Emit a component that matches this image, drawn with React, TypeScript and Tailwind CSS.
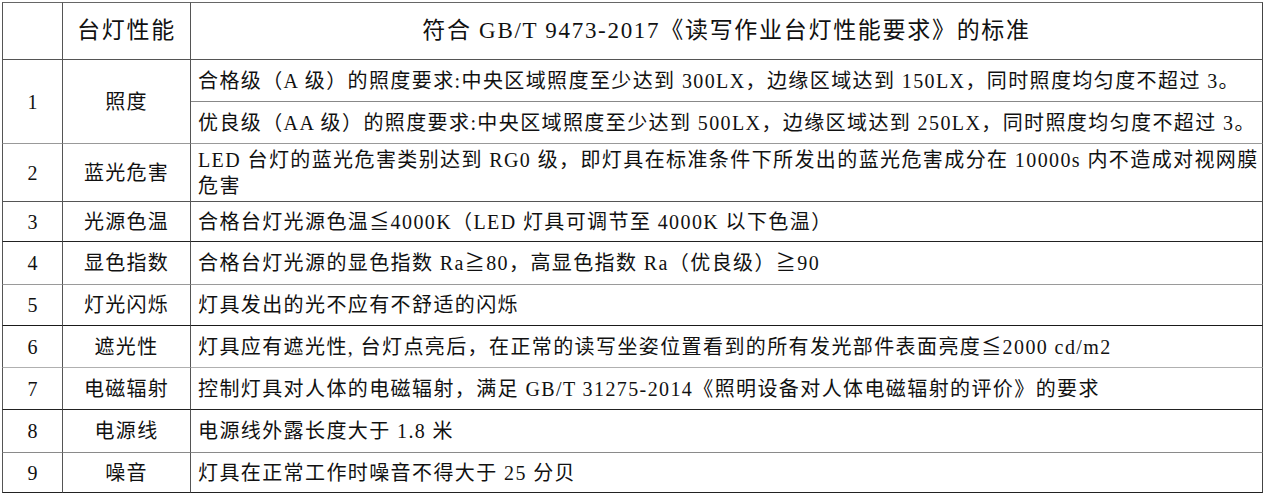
import React from "react";

type Row = {
    no: string;
    name: string;
    text: React.ReactNode;
    h: string;
    line: string;
};

// rows 2-9, row 1 has two sub rows so it is written by hand below
const rows: Row[] = [
    {
        no: "2",
        name: "蓝光危害",
        text: (
            <>
                <span className="whitespace-nowrap">
                    LED 台灯的蓝光危害类别达到 RG0 级，即灯具在标准条件下所发出的蓝光危害成分在 10000s 内不造成对视网膜
                </span>
                <br />
                危害
            </>
        ),
        h: "h-[58px]",
        line: "border-b-[#555]",
    },
    {
        no: "3",
        name: "光源色温",
        text: "合格台灯光源色温≦4000K（LED 灯具可调节至 4000K 以下色温）",
        h: "h-[40px]",
        line: "border-b-[#222]",
    },
    {
        no: "4",
        name: "显色指数",
        text: "合格台灯光源的显色指数 Ra≧80，高显色指数 Ra（优良级）≧90",
        h: "h-[43px]",
        line: "border-b-[#9a9a9a]",
    },
    {
        no: "5",
        name: "灯光闪烁",
        text: "灯具发出的光不应有不舒适的闪烁",
        h: "h-[41px]",
        line: "border-b-[#1a1a1a]",
    },
    {
        no: "6",
        name: "遮光性",
        text: "灯具应有遮光性, 台灯点亮后，在正常的读写坐姿位置看到的所有发光部件表面亮度≦2000 cd/m2",
        h: "h-[42px]",
        line: "border-b-[#b0b0b0]",
    },
    {
        no: "7",
        name: "电磁辐射",
        text: "控制灯具对人体的电磁辐射，满足 GB/T 31275-2014《照明设备对人体电磁辐射的评价》的要求",
        h: "h-[42px]",
        line: "border-b-[#222]",
    },
    {
        no: "8",
        name: "电源线",
        text: "电源线外露长度大于 1.8 米",
        h: "h-[43px]",
        line: "border-b-[#8a8a8a]",
    },
    {
        no: "9",
        name: "噪音",
        text: "灯具在正常工作时噪音不得大于 25 分贝",
        h: "h-[40px]",
        line: "border-b-[#222]",
    },
];

const App = () => {
    const noCell =
        "border-l border-r border-b border-l-[#555] border-r-[#555] text-center align-middle text-[20px] p-0";
    const nameCell =
        "border-r border-b border-r-[#555] text-center align-middle text-[20px] tracking-[1.3px] p-0";
    const textCell =
        "border-r border-b border-r-[#444] text-left align-middle text-[20px] tracking-[1.4px] leading-[26px] pl-[7px] pr-0 py-0";

    return (
        <div className="bg-white w-[1266px] h-[495px] pl-[2px] pt-[2px] font-['Liberation_Serif','Noto_Sans_CJK_SC',serif] text-[#111]">
            <table className="table-fixed border-separate border-spacing-0 w-[1261px]">
                <colgroup>
                    <col className="w-[61px]" />
                    <col className="w-[128px]" />
                    <col className="w-[1072px]" />
                </colgroup>
                <tbody>
                    <tr>
                        <td className="h-[58px] border-t border-t-[#666] border-l border-l-[#555] border-r border-r-[#555] border-b border-b-[#555] p-0"></td>
                        <td className="border-t border-t-[#666] border-r border-r-[#555] border-b border-b-[#555] text-center align-middle text-[23px] tracking-[1.8px] p-0">
                            台灯性能
                        </td>
                        <td className="border-t border-t-[#666] border-r border-r-[#444] border-b border-b-[#555] text-center align-middle text-[23px] tracking-[1.7px] p-0">
                            符合 GB/T 9473-2017《读写作业台灯性能要求》的标准
                        </td>
                    </tr>
                    <tr>
                        <td rowSpan={2} className={`${noCell} border-b-[#999]`}>
                            1
                        </td>
                        <td rowSpan={2} className={`${nameCell} border-b-[#999]`}>
                            照度
                        </td>
                        <td className={`${textCell} h-[42px] border-b-[#888] whitespace-nowrap`}>
                            合格级（A 级）的照度要求:中央区域照度至少达到 300LX，边缘区域达到 150LX，同时照度均匀度不超过 3。
                        </td>
                    </tr>
                    <tr>
                        <td className={`${textCell} h-[42px] border-b-[#999] whitespace-nowrap`}>
                            优良级（AA 级）的照度要求:中央区域照度至少达到 500LX，边缘区域达到 250LX，同时照度均匀度不超过 3。
                        </td>
                    </tr>
                    {rows.map((r) => (
                        <tr key={r.no}>
                            <td className={`${noCell} ${r.h} ${r.line}`}>{r.no}</td>
                            <td className={`${nameCell} ${r.line}`}>{r.name}</td>
                            <td className={`${textCell} ${r.line}`}>{r.text}</td>
                        </tr>
                    ))}
                </tbody>
            </table>
        </div>
    );
};

export default App;
